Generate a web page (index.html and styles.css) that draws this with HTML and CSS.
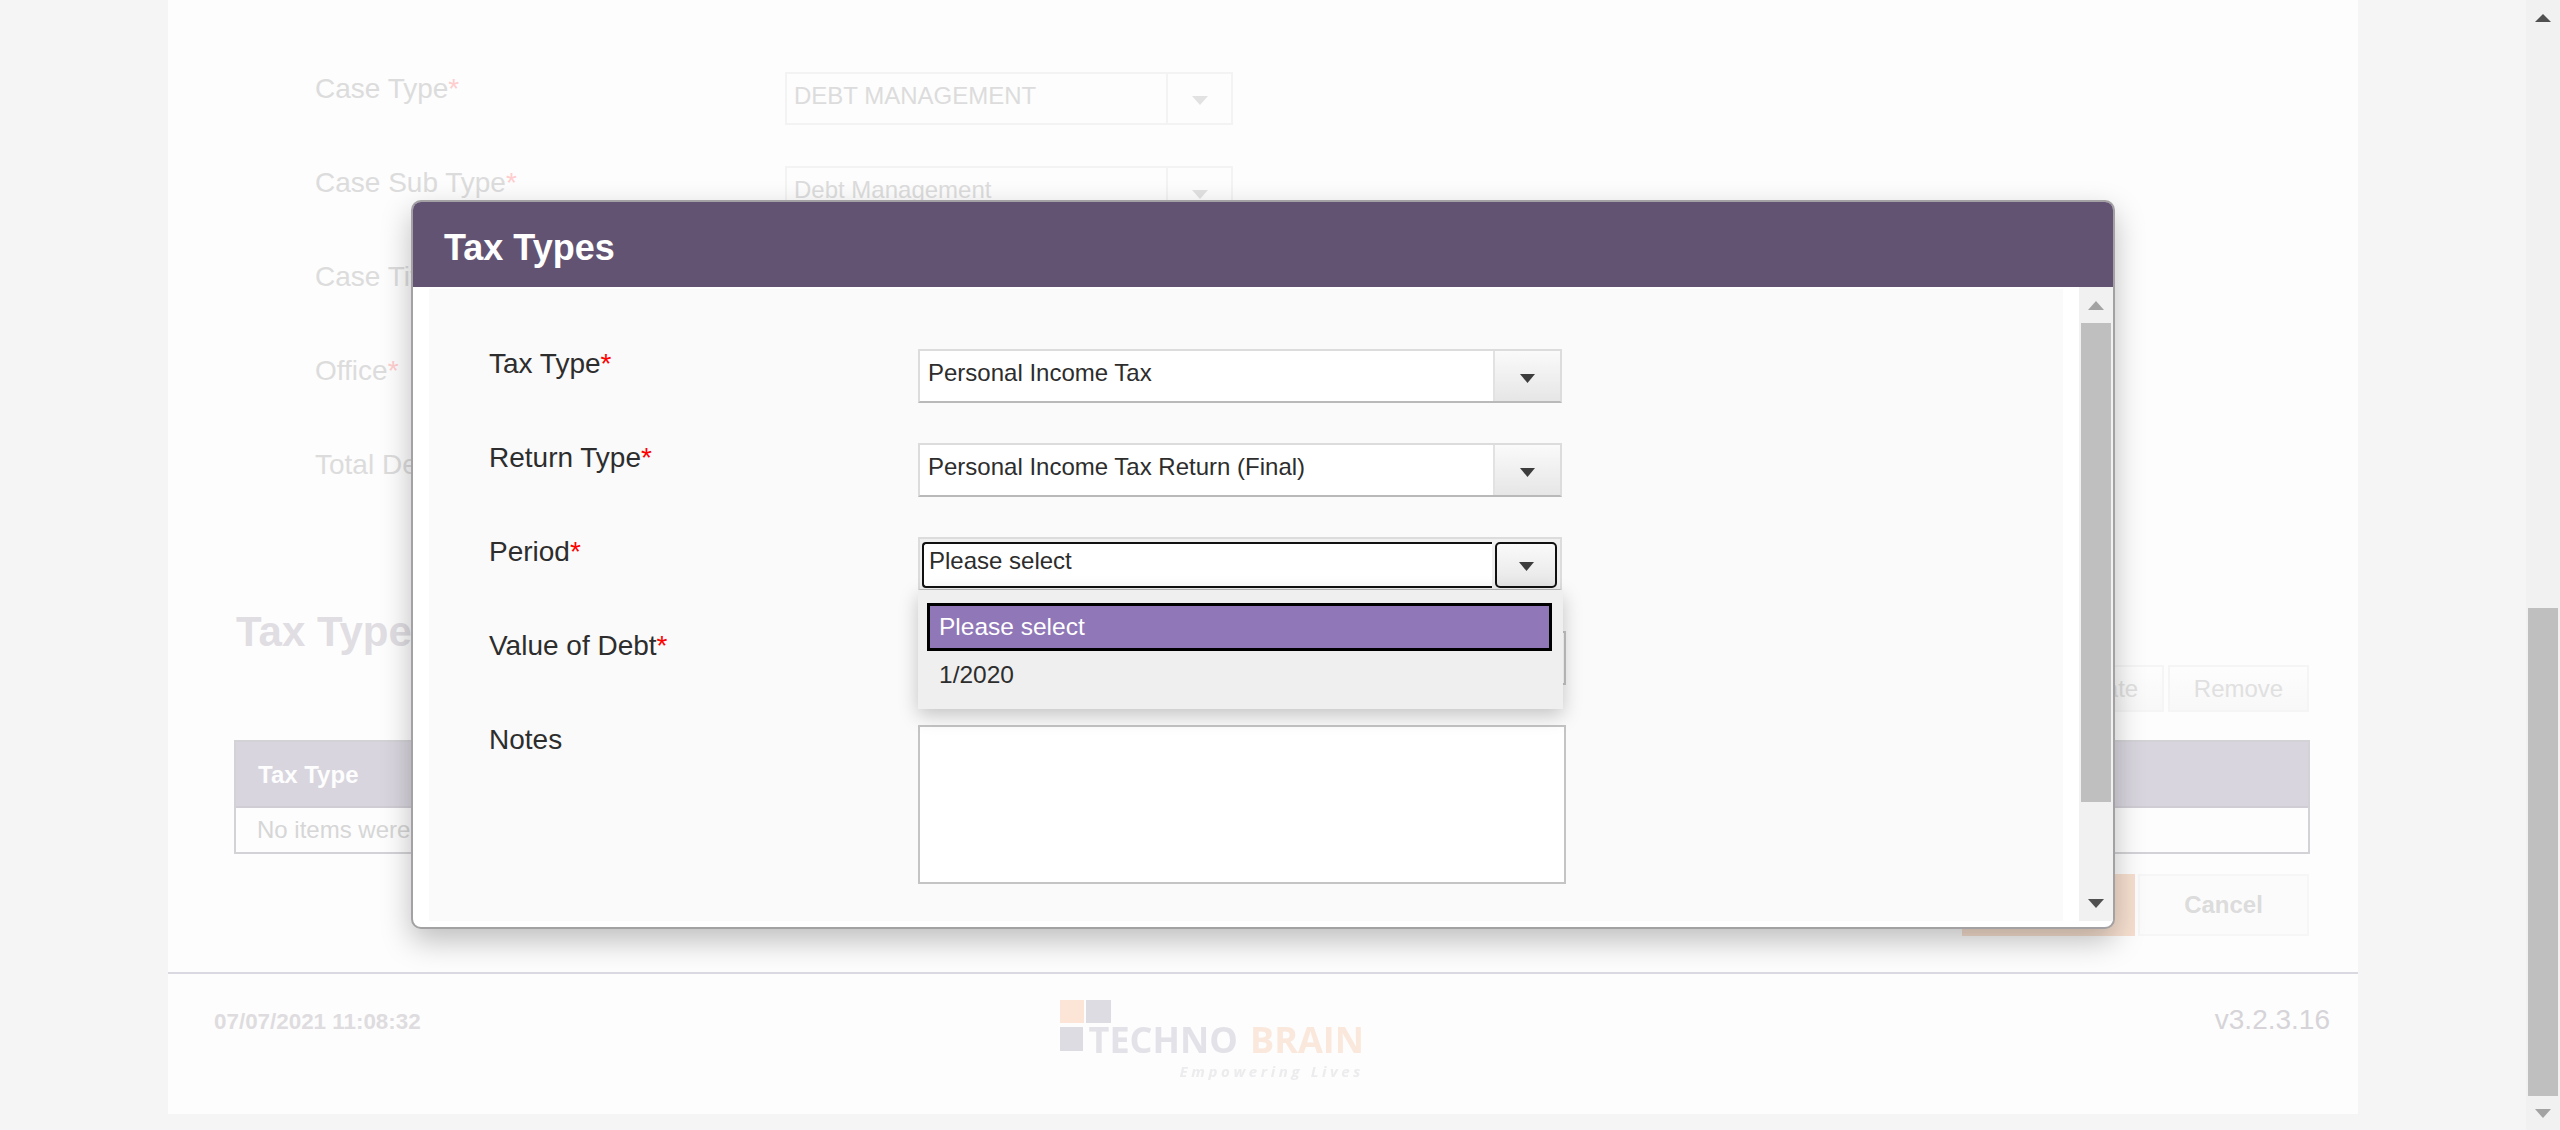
FILE: index.html
```html
<!DOCTYPE html>
<html lang="en">
<head>
    <meta charset="UTF-8">
    <title>Tax Types</title>
    <link rel="stylesheet" href="styles.css">
</head>
<body>

    <div class="page-area">
        <div class="page">
            <div class="case-form">
                <div class="case-row">
                    <label class="case-label">Case Type<span class="req">*</span></label>
                    <div class="case-select"><span class="case-value">DEBT MANAGEMENT</span><span class="case-btn"><svg width="16" height="9" viewBox="0 0 16 9"><path d="M0 0h16L8 9z" fill="#e2e2e2"/></svg></span></div>
                </div>
                <div class="case-row">
                    <label class="case-label">Case Sub Type<span class="req">*</span></label>
                    <div class="case-select"><span class="case-value">Debt Management</span><span class="case-btn"><svg width="16" height="9" viewBox="0 0 16 9"><path d="M0 0h16L8 9z" fill="#e2e2e2"/></svg></span></div>
                </div>
                <div class="case-row"><label class="case-label">Case Title<span class="req">*</span></label></div>
                <div class="case-row"><label class="case-label">Office<span class="req">*</span></label></div>
                <div class="case-row"><label class="case-label">Total Debt</label></div>
            </div>

            <div class="tax-section">
                <h2 class="section-title">Tax Types</h2>
                <div class="toolbar">
                    <button class="ghost-btn update-btn">Update</button>
                    <button class="ghost-btn remove-btn">Remove</button>
                </div>
                <div class="tax-table">
                    <div class="tax-head">Tax Type</div>
                    <div class="tax-empty">No items were found</div>
                </div>
                <div class="actions">
                    <button class="save-btn">Save</button>
                    <button class="cancel-btn">Cancel</button>
                </div>
            </div>

            <div class="footer">
                <div class="footer-date">07/07/2021 11:08:32</div>
                <div class="logo">
                    <div class="logo-squares">
                        <span class="sq sq-orange"></span>
                        <span class="sq sq-grey"></span>
                    </div>
                    <div class="logo-main">
                        <span class="sq sq-grey"></span>
                        <span class="logo-techno">TECHNO</span>
                        <span class="logo-brain">BRAIN</span>
                    </div>
                    <div class="logo-tag">Empowering Lives</div>
                </div>
                <div class="footer-version">v3.2.3.16</div>
            </div>
        </div>
    </div>

    <div class="scrollbar page-scroll">
        <div class="page-scroll-up"><svg width="16" height="8" viewBox="0 0 16 8"><path d="M8 0l8 8H0z" fill="#505050"/></svg></div>
        <div class="page-thumb"></div>
        <div class="scroll-btn"><svg width="16" height="9" viewBox="0 0 16 9"><path d="M0 0h16L8 9z" fill="#a3a3a3"/></svg></div>
    </div>

    <div class="modal">
        <div class="modal-head">Tax Types</div>
        <div class="modal-main">
            <div class="modal-scroll-area">
                <div class="modal-form">
                    <div class="form-row">
                        <label class="form-label">Tax Type<span class="req-on">*</span></label>
                        <div class="select">
                            <span class="select-value">Personal Income Tax</span>
                            <span class="select-btn"><svg width="15" height="9" viewBox="0 0 15 9"><path d="M0 0h15L7.5 9z" fill="#3d3d3d"/></svg></span>
                        </div>
                    </div>
                    <div class="form-row">
                        <label class="form-label">Return Type<span class="req-on">*</span></label>
                        <div class="select">
                            <span class="select-value">Personal Income Tax Return (Final)</span>
                            <span class="select-btn"><svg width="15" height="9" viewBox="0 0 15 9"><path d="M0 0h15L7.5 9z" fill="#3d3d3d"/></svg></span>
                        </div>
                    </div>
                    <div class="form-row">
                        <label class="form-label">Period<span class="req-on">*</span></label>
                        <div class="select select-open">
                            <span class="select-value">Please select</span>
                            <span class="select-btn"><svg width="15" height="9" viewBox="0 0 15 9"><path d="M0 0h15L7.5 9z" fill="#3d3d3d"/></svg></span>
                            <ul class="dropdown">
                                <li class="dropdown-item is-selected">Please select</li>
                                <li class="dropdown-item">1/2020</li>
                            </ul>
                        </div>
                    </div>
                    <div class="form-row">
                        <label class="form-label">Value of Debt<span class="req-on">*</span></label>
                        <div class="debt-input"></div>
                    </div>
                    <div class="form-row">
                        <label class="form-label">Notes</label>
                        <div class="notes"></div>
                    </div>
                </div>
            </div>
            <div class="scrollbar modal-scroll">
                <div class="scroll-btn"><svg width="16" height="9" viewBox="0 0 16 9"><path d="M8 0l8 9H0z" fill="#a3a3a3"/></svg></div>
                <div class="modal-thumb"></div>
                <div class="scroll-btn scroll-down"><svg width="16" height="9" viewBox="0 0 16 9"><path d="M0 0h16L8 9z" fill="#505050"/></svg></div>
            </div>
        </div>
    </div>

</body>
</html>
```

FILE: styles.css
```css
* {
    box-sizing: border-box;
}

body {
    margin: 0;
    height: 1130px;
    overflow: hidden;
    display: flex;
    background-color: #f5f5f5;
    font-family: "Liberation Sans", Arial, sans-serif;
    color: #2d2d2d;
}

button {
    font-family: inherit;
}

.page-area {
    flex: 1;
    padding: 0 168px;
}

.page {
    height: 1114px;
    background-color: #fdfdfd;
    display: flex;
    flex-direction: column;
}

/* faded form behind the modal */
.case-form {
    padding: 66px 0 0 147px;
}

.case-row {
    display: flex;
    height: 94px;
}

.case-label {
    width: 470px;
    padding-top: 5px;
    font-size: 28px;
    line-height: 36px;
    color: #dcdcdc;
}

.req {
    color: #ffcdcd;
}

.case-select {
    display: flex;
    width: 448px;
    height: 53px;
    margin-top: 6px;
    border: 2px solid #f3f3f3;
    background-color: #fdfdfd;
}

.case-value {
    flex: 1;
    padding: 7px 7px;
    font-size: 24px;
    line-height: 30px;
    color: #dcdcdc;
    border-right: 2px solid #f3f3f3;
}

.case-btn {
    width: 63px;
    display: flex;
    align-items: center;
    justify-content: center;
    padding-top: 4px;
}

.tax-section {
    padding: 0 48px 0 66px;
}

.section-title {
    margin: 72px 0 0 2px;
    font-size: 42px;
    line-height: 48px;
    font-weight: bold;
    color: #e0dde3;
}

.toolbar {
    display: flex;
    justify-content: flex-end;
    gap: 4px;
    margin-top: 9px;
    padding-right: 1px;
}

.ghost-btn {
    height: 47px;
    border: 2px solid #f5f5f5;
    background: linear-gradient(#fdfdfd, #f8f8f8);
    font-size: 24px;
    color: #e0e0e0;
    padding: 0;
}

.update-btn {
    width: 129px;
}

.remove-btn {
    width: 141px;
}

.tax-table {
    margin-top: 28px;
    border: 2px solid #d3d2d6;
}

.tax-head {
    height: 66px;
    padding: 0 22px;
    background-color: #d8d5de;
    border-bottom: 2px solid #d0ced4;
    color: #fdfdfd;
    font-size: 24px;
    font-weight: bold;
    line-height: 66px;
}

.tax-empty {
    height: 44px;
    padding: 0 21px;
    font-size: 24px;
    line-height: 44px;
    color: #d6d6d6;
}

.actions {
    display: flex;
    justify-content: flex-end;
    gap: 3px;
    margin-top: 20px;
    padding-right: 1px;
}

.save-btn {
    width: 173px;
    height: 62px;
    border: 0;
    background-color: #f6dfcf;
    color: #fdfdfd;
    font-size: 24px;
    font-weight: bold;
}

.cancel-btn {
    width: 171px;
    height: 62px;
    border: 2px solid #f6f6f6;
    background-color: #fbfbfb;
    color: #dcdcdc;
    font-size: 24px;
    font-weight: bold;
}

.footer {
    margin-top: 36px;
    padding: 0 28px 0 46px;
    border-top: 2px solid #dad8e0;
    flex: 1;
    display: grid;
    grid-template-columns: 846px auto 1fr;
    align-items: start;
}

.footer-date {
    margin-top: 35px;
    font-size: 22.4px;
    line-height: 26px;
    font-weight: bold;
    color: #dedcdf;
}

.footer-version {
    margin-top: 30px;
    text-align: right;
    font-size: 28px;
    line-height: 32px;
    color: #d6d4d8;
}

/* logo is a soft, scaled up bitmap in the original */
.logo {
    margin-top: 26px;
    width: 304px;
    filter: blur(0.7px);
}

.logo-squares {
    display: flex;
    gap: 2px;
    height: 23px;
    margin-bottom: 4px;
}

.sq {
    display: block;
    width: 24px;
    height: 23px;
}

.logo-squares .sq-grey {
    width: 25px;
}

.sq-orange {
    background-color: #fce4d6;
}

.sq-grey {
    background-color: #dddce3;
}

.logo-main {
    display: flex;
    height: 26px;
    font-family: "Open Sans", sans-serif;
    font-size: 36px;
    font-weight: 700;
    line-height: 26px;
}

.logo-main .sq {
    height: 24px;
    margin-right: 6px;
}

.logo-techno {
    color: #e3e2e8;
}

.logo-brain {
    margin-left: 12px;
    color: #fae8dc;
}

.logo-tag {
    margin-top: 11px;
    text-align: right;
    font-family: "Open Sans", sans-serif;
    font-size: 15px;
    line-height: 14px;
    font-weight: 700;
    font-style: italic;
    letter-spacing: 3.6px;
    color: #ecebed;
}

/* scrollbars */
.scrollbar {
    width: 34px;
    display: flex;
    flex-direction: column;
    background-color: #f1f1f1;
}

.scroll-btn {
    height: 34px;
    display: flex;
    align-items: center;
    justify-content: center;
}

.page-scroll-up {
    height: 608px;
    padding-top: 14px;
    display: flex;
    justify-content: center;
    align-items: flex-start;
}

.page-thumb {
    height: 488px;
    margin: 0 2px;
    background-color: #bfbfbf;
}

.modal-scroll .scroll-btn {
    height: 36px;
}

.modal-thumb {
    height: 479px;
    margin: 0 2px;
    background-color: #bfbfbf;
}

.scroll-down {
    margin-top: auto;
}

/* modal */
.modal {
    position: absolute;
    left: 411px;
    top: 200px;
    width: 1704px;
    height: 729px;
    display: flex;
    flex-direction: column;
    border: 2px solid #a3a1a3;
    border-radius: 10px;
    background-color: #fff;
    box-shadow: 0 12px 30px rgba(0, 0, 0, 0.25);
}

.modal-head {
    height: 85px;
    padding-left: 31px;
    background-color: #625373;
    border-radius: 8px 8px 0 0;
    color: #fff;
    font-size: 36px;
    font-weight: bold;
    line-height: 91px;
}

.modal-main {
    height: 634px;
    display: flex;
}

.modal-scroll-area {
    flex: 1;
    padding: 2px 16px 0 16px;
}

.modal-form {
    height: 632px;
    padding: 54px 0 0 60px;
    background-color: #fafafa;
    overflow: hidden;
}

.modal-scroll {
    height: 634px;
}

.form-row {
    display: flex;
    height: 94px;
}

.form-label {
    width: 429px;
    padding-top: 3px;
    font-size: 28px;
    line-height: 36px;
}

.req-on {
    color: #f00;
}

.select {
    position: relative;
    display: flex;
    width: 644px;
    height: 54px;
    margin-top: 6px;
    background-color: #fff;
    border: 2px solid #dcdcdc;
    border-bottom-color: #b9b9b9;
}

.select-value {
    flex: 1;
    padding: 7px 8px 0;
    font-size: 24px;
    line-height: 30px;
}

.select-btn {
    width: 67px;
    display: flex;
    align-items: center;
    justify-content: center;
    padding-top: 4px;
    background: linear-gradient(#fafafa, #e6e6e6);
    border-left: 2px solid #e2e2e2;
}

.select-open {
    padding: 3px 3px 1px 2px;
    background-color: #f0f0f0;
}

.select-open .select-value {
    padding: 0 5px;
    background-color: #fff;
    border: 2px solid #111;
    border-right: 0;
    border-radius: 4px 0 0 4px;
    line-height: 34px;
}

.select-open .select-btn {
    width: 62px;
    margin-left: 3px;
    border: 2px solid #111;
    border-radius: 5px;
    padding-top: 2px;
}

.dropdown {
    position: absolute;
    left: -2px;
    top: 51px;
    width: 645px;
    height: 119px;
    margin: 0;
    padding: 13px 11px 0 9px;
    list-style: none;
    background-color: #efefef;
    box-shadow: 0 6px 18px rgba(0, 0, 0, 0.22);
    z-index: 2;
}

.dropdown-item {
    height: 48px;
    padding: 0 9px;
    font-size: 24.5px;
    line-height: 42px;
    border: 3px solid transparent;
}

.dropdown-item.is-selected {
    background-color: #9077b7;
    border-color: #000;
    color: #fff;
}

.debt-input {
    width: 648px;
    height: 54px;
    margin-top: 6px;
    background-color: #fff;
    border: 2px solid #c4c4c4;
}

.notes {
    width: 648px;
    height: 159px;
    margin-top: 6px;
    background-color: #fff;
    border: 2px solid #c4c4c4;
}
```
